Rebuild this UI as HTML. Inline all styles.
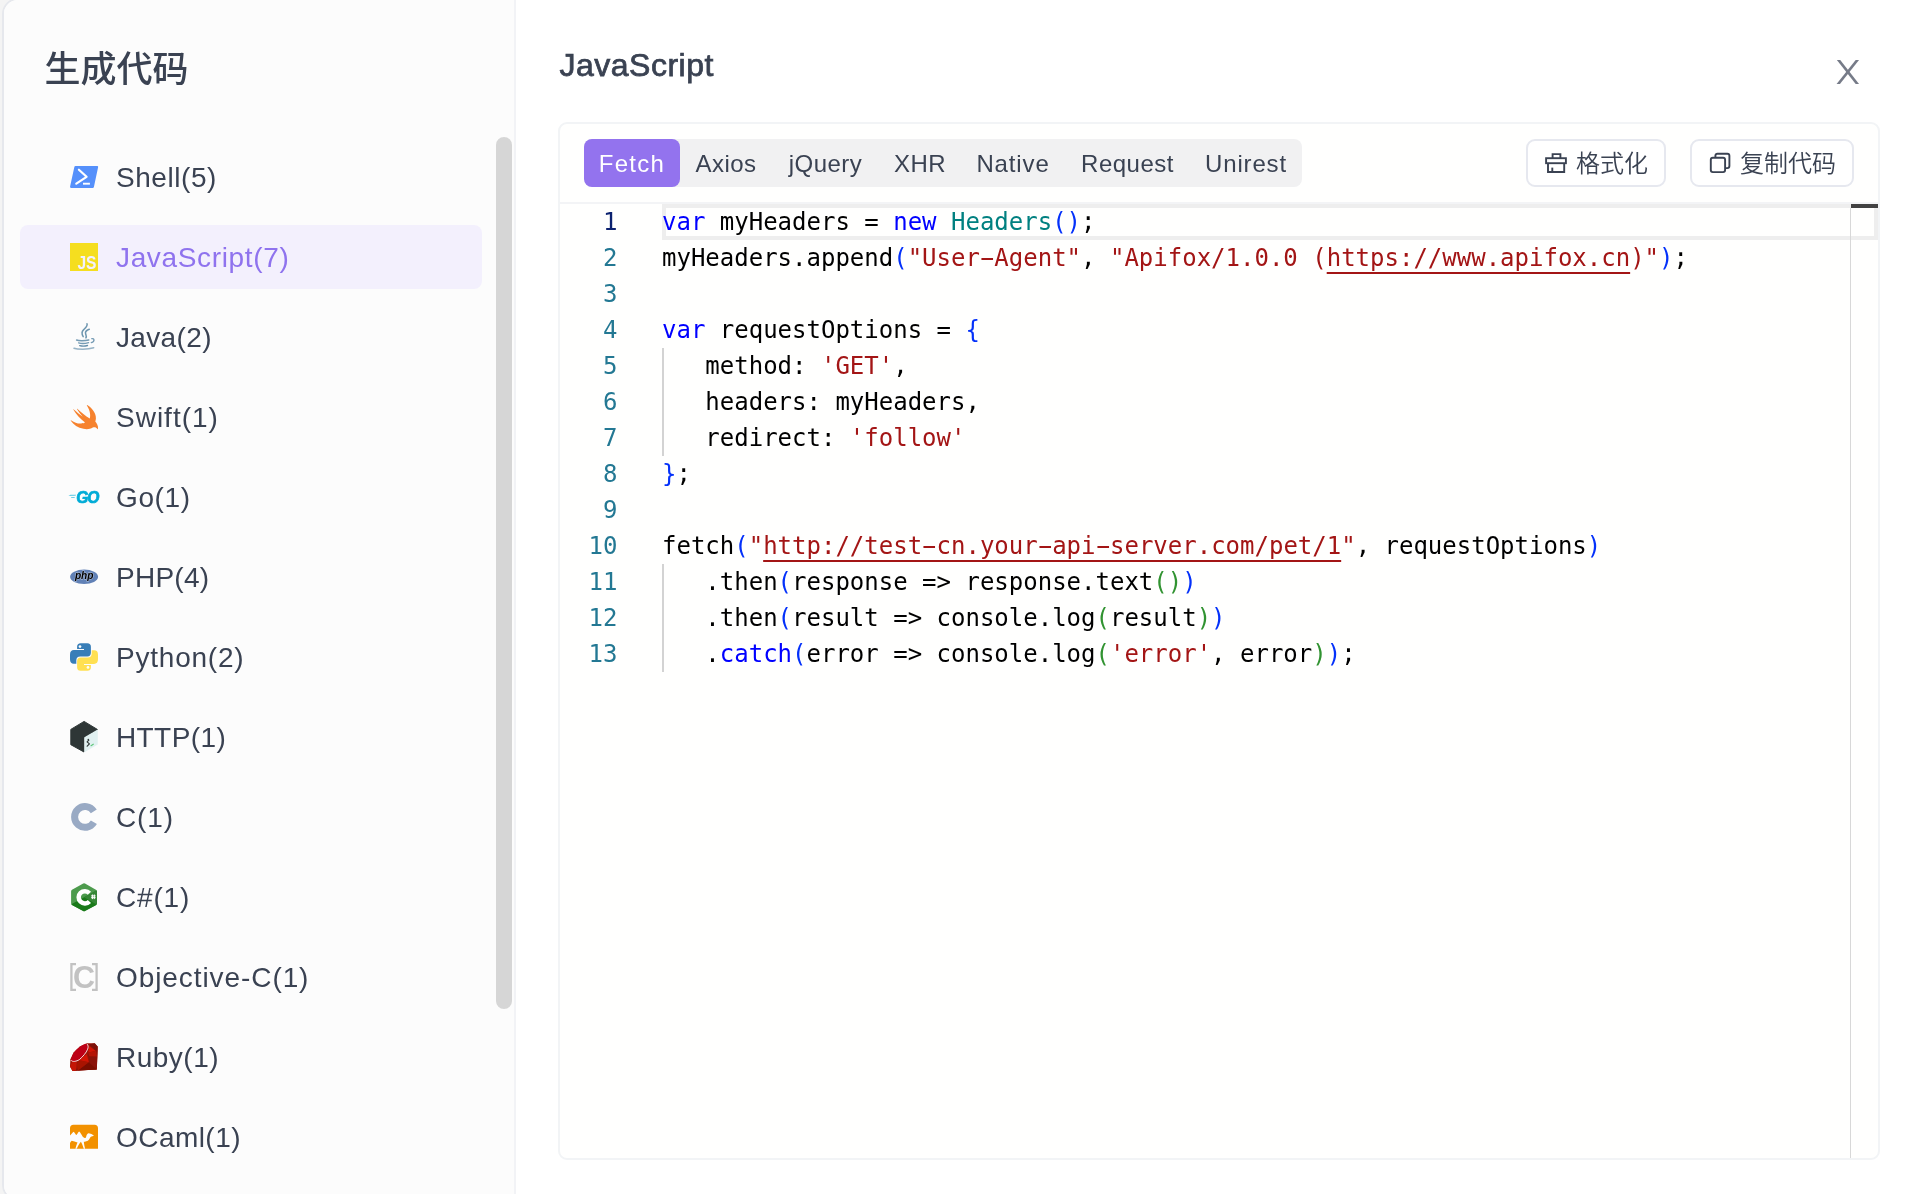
<!DOCTYPE html>
<html lang="zh-CN">
<head>
<meta charset="utf-8">
<title>生成代码</title>
<style>
*{box-sizing:border-box;margin:0;padding:0}
html,body{width:1912px;height:1194px;overflow:hidden;background:#f4f4f4}
body{position:relative;font-family:"Liberation Sans","Noto Sans CJK SC",sans-serif;color:#3a4252}
.modal{position:absolute;left:2px;top:-2px;width:1960px;height:1203px;background:#fff;border:2px solid #e6e8ed;border-radius:16px;overflow:hidden}
.sidebg{position:absolute;left:0;top:0;width:512px;height:1204px;background:#fcfcfc;border-right:2px solid #f2f3f6}
.layer{position:absolute;left:0;top:0;width:1912px;height:1194px;will-change:transform}
.h1{position:absolute;left:44.5px;top:44px;font-size:36px;line-height:52px;font-weight:500;color:#3a4252;white-space:nowrap}
.item{position:absolute;left:20px;width:462px;height:64px;border-radius:8px;font-size:28px;line-height:64px;white-space:nowrap;color:#3a4252}
.item.sel{background:#f3f0fd;color:#8f73ee}
.item svg{position:absolute;left:50px;top:18px;width:28px;height:28px;overflow:visible}
.item span{position:absolute;left:96px;top:1px}
.thumb{position:absolute;left:496px;top:137px;width:16px;height:872px;border-radius:8px;background:#d6d6d6}
.h2{position:absolute;left:559.5px;top:46px;font-size:32px;line-height:38px;color:#3a4252;white-space:nowrap;letter-spacing:.5px;-webkit-text-stroke:.75px #3a4252}
.close{position:absolute;left:1836px;top:60px;width:24px;height:24px;overflow:visible}
.box{position:absolute;left:558px;top:122px;width:1322px;height:1038px;border:2px solid #f2f4f6;border-radius:9px;background:#fffffe}
.tabs{position:absolute;left:584px;top:139px;width:718px;height:48px;border-radius:8px;background:#f1f1f2;font-size:24px;line-height:48px;white-space:nowrap}
.tab{position:absolute;top:0;height:48px;text-align:center;color:#3a4252;letter-spacing:.5px;padding-top:1px}
.tab.on{background:#9373ee;color:#fff;border-radius:8px}
.btn{position:absolute;top:139px;height:48px;border:2px solid #e6e8ef;border-radius:9px;background:#fff;font-size:24px;line-height:44px;color:#3a4252;white-space:nowrap}
.btn svg{position:absolute;left:16px;top:9px;width:24px;height:24px;overflow:visible}
.btn span{position:absolute;left:48px;top:1px;font-weight:350}
.ed{position:absolute;left:560px;top:204px;width:1318px;height:955px;font-family:"DejaVu Sans Mono","Liberation Mono",monospace;font-size:24px;line-height:36px;color:#000}
.topline{position:absolute;left:0;top:-2px;width:1318px;height:2px;background:#f3f4f6}
.cur{position:absolute;left:102px;top:0;width:1216px;height:36px;border:4px solid #eeeeee}
.ln{position:absolute;left:0;width:57.5px;text-align:right;color:#237893;height:36px}
.cl{position:absolute;left:102px;height:36px;white-space:pre}
.k{color:#0000ff}.s{color:#a31515}.t{color:#008080}.b1{color:#0431fa}.b2{color:#319331}
.u{text-decoration:underline;text-decoration-thickness:2px;text-underline-offset:6px;text-decoration-skip-ink:none}
.hy{display:inline-block;transform:scaleX(1.9)}
.guide{position:absolute;left:102px;width:2px;background:#d3d3d3}
.ruler{position:absolute;left:1290px;top:4px;width:1px;height:950px;background:#d8d8d8}
.mark{position:absolute;left:1291px;top:0;width:27px;height:4px;background:#424242}
</style>
</head>
<body>
<div class="modal"><div class="sidebg"></div></div>
<div class="layer">
<div class="h1">生成代码</div>
<div class="item" style="top:145px"><svg viewBox="0 0 28 28"><path d="M5.6 2.9H27a1.1 1.1 0 0 1 1.1 1.4L23.9 24a1.2 1.2 0 0 1-1.2.9H1.2A1.1 1.1 0 0 1 .1 23.5L4.4 3.8A1.2 1.2 0 0 1 5.6 2.9Z" fill="#5590fb"/><path d="M8.9 6.7L16.6 13.8 6.3 20.7" fill="none" stroke="#fff" stroke-width="2.2" stroke-linecap="round" stroke-linejoin="round"/><path d="M13 20.700H19.900" stroke="#fff" stroke-width="1.900"/></svg><span style="letter-spacing:0.55px">Shell(5)</span></div>
<div class="item sel" style="top:225px"><svg viewBox="0 0 28 28"><rect x="0" y="0" width="28" height="28" fill="#f5de1f"/><text transform="translate(7.500 25.700) scale(.85 1)" font-family="Liberation Sans, sans-serif" font-weight="700" font-size="18.300" letter-spacing="-0.300" fill="#f3f0fd">JS</text></svg><span style="letter-spacing:0.65px">JavaScript(7)</span></div>
<div class="item" style="top:305px"><svg viewBox="0 0 28 28"><g fill="none" stroke="#5382a1" stroke-linecap="round"><path d="M17 .8c.9 2.2-1.2 3.9-3.3 5.8-2.2 2-2.5 3.7-.5 7" stroke-width="1.5" opacity=".85"/><path d="M19.3 6.2c-2.7 1-4.3 2.700-3.7 4.600.5 1.600 1.200 2.400.300 4.100" stroke-width="1.5" opacity=".85"/><path d="M6.600 17c1.500.8 8 1 12.200-.1" stroke-width="1.500" opacity=".8"/><path d="M8.600 19.800c2 .7 6.800.7 10-.2" stroke-width="1.300" opacity=".8"/><path d="M9.700 22.600c2 .6 5.300.6 7.800-.1" stroke-width="1.400" opacity=".9"/><path d="M4 25.200c3.500 1.300 13.500 1.500 19.700-.4" stroke-width="1.500" opacity=".6"/><path d="M21.800 15.600c2.600-.5 3.400 2.900-.5 4" stroke-width="1.300" opacity=".8"/></g></svg><span style="letter-spacing:0.35px">Java(2)</span></div>
<div class="item" style="top:385px"><svg viewBox="0 0 28 28"><path d="M17.2 2c5.400 3.300 9 8.600 8.700 13.400-.1 1.400-.4 2.500-.6 3.200 1.600 1.900 3 4.200 2.700 6.900-.1.800-.3 1-.6.500-1.200-2-3.200-2.200-4.600-1.400-2.400 1.400-5.700 2-9.300 1.200C7.900 24.700 3.500 22 .8 17.800c-.3-.5.100-.7.500-.4 3.200 2.200 6.400 3.300 9.600 3.100 2-.1 3.300-.500 4.200-1C10.600 16.300 6.300 11.500 3.400 6.800c-.3-.5 0-.7.400-.4 2.700 2.400 6 5.200 8.900 7.300-1.800-2-4-4.900-5.600-7.500-.3-.5 0-.7.400-.3 3.600 3.300 8 7 12.300 9.600.9-3.200.4-8-2.900-13.100-.2-.4 0-.6.300-.4Z" fill="#f6822e"/></svg><span style="letter-spacing:1.0px">Swift(1)</span></div>
<div class="item" style="top:465px"><svg viewBox="0 0 28 28"><g fill="#00acd7"><path d="M-1.600 12.900L0.400 11.700H6L5.600 12.700Z" opacity=".6"/><rect x="1" y="14" width="3.900" height="1" rx=".4" opacity=".55"/></g><text x="6.300" y="19.500" font-family="Liberation Sans, sans-serif" font-weight="700" font-style="italic" font-size="15.600" letter-spacing="-1.100" fill="#00acd7" stroke="#00acd7" stroke-width=".7">GO</text></svg><span style="letter-spacing:0.6px">Go(1)</span></div>
<div class="item" style="top:545px"><svg viewBox="0 0 28 28"><ellipse cx="14.100" cy="13.800" rx="14" ry="7.200" fill="#6181b6"/><text x="4.900" y="16.300" font-family="Liberation Sans, sans-serif" font-weight="700" font-style="italic" font-size="10.200" fill="#000" stroke="#fff" stroke-opacity=".55" stroke-width=".9" paint-order="stroke">php</text></svg><span style="letter-spacing:0.25px">PHP(4)</span></div>
<div class="item" style="top:625px"><svg viewBox="0 0 28 28"><path d="M7.100 3.800Q7.100.2 10.700.2H17.300Q20.900.2 20.900 3.800V9.800Q20.900 13.400 17.300 13.400H10.300Q6.300 13.400 6.300 17.400V20.700H3.800Q0 20.700 0 16.300V11.700Q0 7.100 4 7.100H14V6.100H7.100Z" fill="#387eb8"/><circle cx="10" cy="3.600" r="1.350" fill="#fcfcfc"/><g transform="rotate(180 14 14)"><path d="M7.100 3.800Q7.100.2 10.700.2H17.300Q20.900.2 20.900 3.800V9.800Q20.900 13.400 17.300 13.400H10.300Q6.300 13.400 6.300 17.400V20.700H3.800Q0 20.700 0 16.300V11.700Q0 7.100 4 7.100H14V6.100H7.100Z" fill="#ffe052"/><circle cx="10" cy="3.600" r="1.350" fill="#fcfcfc"/></g></svg><span style="letter-spacing:0.78px">Python(2)</span></div>
<div class="item" style="top:705px"><svg viewBox="0 0 28 28"><path d="M14.100 -1.600L27.500 6.500 14 14.400V29L.8 21.700V6.400Z" fill="#2e3636" stroke="#2e3636" stroke-width="1" stroke-linejoin="round"/><path d="M27.800 6.600V21.400L14.400 29.200V14.300Z" fill="#e1f1f1"/><path d="M18.800 17.200l-1.700 1.700 2.300 2-2.200 2.300" fill="none" stroke="#2e3636" stroke-width="1.200" stroke-linecap="round" stroke-linejoin="round"/><circle cx="18.300" cy="16.600" r=".8" fill="#2e3636"/><path d="M21 22.700l2.300-1.500" stroke="#5fc77a" stroke-width="1.100" stroke-linecap="round"/></svg><span style="letter-spacing:0.4px">HTTP(1)</span></div>
<div class="item" style="top:785px"><svg viewBox="0 0 28 28"><path d="M23.800 8.400A10.400 10.400 0 1 0 23.900 19.300" fill="none" stroke="#99aac4" stroke-width="7"/></svg><span style="letter-spacing:0.85px">C(1)</span></div>
<div class="item" style="top:865px"><svg viewBox="0 0 28 28"><path d="M13.200.5a1.800 1.800 0 0 1 1.800 0l10.900 6.200a1.800 1.800 0 0 1 .9 1.600v12a1.800 1.800 0 0 1-.9 1.600L15 28.100a1.800 1.800 0 0 1-1.800 0L2 21.900a1.800 1.800 0 0 1-.9-1.600v-12A1.800 1.800 0 0 1 2 6.700Z" fill="#4d9b4d"/><path d="M26.500 7.600c.2.300.3.600.3 1v12a1.800 1.800 0 0 1-.9 1.600L15 28.100a1.800 1.800 0 0 1-1.800 0L2 21.900a1.800 1.800 0 0 1-.6-.6Z" fill="#1a7a1a"/><path d="M26.500 7.600c.2.300.3.600.3 1v12c0 .3-.1.600-.2.800L14.100 14.300Z" fill="#368636"/><path d="M19.400 10.200A6.150 6.150 0 1 0 19.400 18.400" fill="none" stroke="#fff" stroke-width="4.500"/><g stroke="#fff" stroke-width="1" fill="none"><path d="M22.400 11.500v4.600M24.300 11.500v4.600M21.100 12.900h4.500M21.100 14.700h4.500"/></g></svg><span style="letter-spacing:0.8px">C#(1)</span></div>
<div class="item" style="top:945px"><svg viewBox="0 0 28 28"><path d="M6 1.100H1.400V26.900H6M22 1.100H26.600V26.900H22" fill="none" stroke="#c2c2c2" stroke-width="2.300"/><text x="2.900" y="24.900" font-family="Liberation Sans, sans-serif" font-weight="700" font-size="30.500" fill="#c2c2c2">C</text></svg><span style="letter-spacing:0.92px">Objective-C(1)</span></div>
<div class="item" style="top:1025px"><svg viewBox="0 0 28 28"><path d="M16.700.2H24.700L27.800 3.800 26.800 26.400 2.500 28 0 23.500.4 16.300 3.800 9.200 10 3.400Z" fill="#9b1508"/><path d="M18.400 9.600L27.700 5 26.800 26.400 12 27.300 2.500 28 18.800 19.300Z" fill="#8a1209"/><path d="M18.800 19.300L26.800 26.400 8 27.500Z" fill="#7a0d00"/><path d="M18.800 2.900L26 8 18.400 9.600Z" fill="#d21404"/><path d="M18.400 9.600L26 8 27 13.600 19.200 13.200Z" fill="#b41305"/><path d="M18.800 1.500L24.700.2 27.800 3.800 26.200 7.800Z" fill="#7d120a"/><path d="M16.750 10.900L18.800 19.300 9.200 17.200Z" fill="#d21404"/><path d="M9.200 17.200L18.800 19.300 8 27.500 6.800 22Z" fill="#a91401"/><path d="M2.500 18.200L6.800 19 6 27.700 2.500 28 0 23.500Z" fill="#c41606"/><path d="M1 17.200C1.400 13.500 3 10.500 5.600 7.600 8.600 4.300 13 1.300 16.750.8c1.600 1 1.700 3.400.9 5.400-1.300 3.500-4.900 7.600-8.450 10.550C6.500 18.300 2.600 19.400 1 17.200Z" fill="#bd0016"/><path d="M16.750.8c1.600 1 1.700 3.400.9 5.400-1.300 3.500-4.900 7.600-8.450 10.550C6.500 18.300 2.600 19.400 1 17.200" fill="none" stroke="#fdeeee" stroke-width=".9"/></svg><span style="letter-spacing:0.5px">Ruby(1)</span></div>
<div class="item" style="top:1105px"><svg viewBox="0 0 28 28"><path d="M0 5.200a3.500 3.500 0 0 1 3.500-3.500h21a3.500 3.500 0 0 1 3.500 3.500V25.700H0Z" fill="#f29100"/><path d="M0 12.600C1.400 11.400 2.400 9.200 3.600 8.700 4.800 9.400 5.400 11.400 6.500 12.100 7.600 11 8.200 9 9.200 8.600 10.600 9.400 11.400 12 12.600 13.400 13.600 14.400 14.600 15 15.500 14.900 16.300 14.400 16.300 12.200 17.200 11.300 17.700 10.500 18.300 10.200 18.800 10.300 20.400 10.700 22.400 11.400 23.900 12.400 23 13.200 21.700 13.200 20.900 13.800 19.900 14.800 19.400 16.400 18.400 17.200 17.200 18.200 15.200 18.600 13.800 18.800 14 21 14.500 23.500 15.100 25.700H13.800C13 23.500 12 20.600 10.900 18.800 9.300 20.800 7.800 23.400 6.700 25.700H5.400C5.900 23.500 6.700 21.300 7.500 19.500 5.500 19.100 3.400 18.200 1.700 17.800 1 18.400.5 19.300 0 20.100Z" fill="#fcfcfc"/></svg><span style="letter-spacing:0.45px">OCaml(1)</span></div>
<div class="thumb"></div>
<div class="h2">JavaScript</div>
<svg class="close" viewBox="0 0 24 25"><path d="M.4 0H3.900L23.500 25H20Z" fill="#767b88"/><path d="M23.500 0H20L.1 25H3.600Z" fill="#767b88"/></svg>
<div class="box"></div>
<div class="tabs"><div class="tab on" style="left:0px;width:96px;letter-spacing:1.25px">Fetch</div><div class="tab" style="left:96px;width:92px;letter-spacing:0.5px">Axios</div><div class="tab" style="left:188px;width:107px;letter-spacing:0.5px">jQuery</div><div class="tab" style="left:295px;width:82px;letter-spacing:0.5px">XHR</div><div class="tab" style="left:377px;width:104px;letter-spacing:0.87px">Native</div><div class="tab" style="left:481px;width:125px;letter-spacing:0.5px">Request</div><div class="tab" style="left:606px;width:112px;letter-spacing:0.85px">Unirest</div></div>
<div class="btn" style="left:1526px;width:140px"><svg viewBox="0 0 24 24" fill="none" stroke="#3a4252" stroke-width="1.9"><path d="M8.600 8.200V4.100H16.400V8.200"/><rect x="2.100" y="8.200" width="19.800" height="5"/><path d="M4 13.200V22H20.200V13.200"/><path d="M8.300 17.600V22"/></svg><span>格式化</span></div>
<div class="btn" style="left:1690px;width:164px"><svg viewBox="0 0 24 24" fill="none" stroke="#3a4252" stroke-width="1.9"><rect x="2.800" y="7.800" width="14.300" height="14.300" rx="2"/><path d="M7.400 7.800V5.700a2 2 0 0 1 2-2H19.400a2 2 0 0 1 2 2V16.100a2 2 0 0 1-2 2H17.100"/></svg><span>复制代码</span></div>
<div class="ed"><div class="topline"></div><div class="cur"></div><div class="guide" style="top:144px;height:108px"></div><div class="guide" style="top:360px;height:108px"></div><div class="ln" style="top:0px"><span style="color:#0b216f">1</span></div><div class="cl" style="top:0px"><span class="k">var</span> myHeaders = <span class="k">new</span> <span class="t">Headers</span><span class="b1">()</span>;</div><div class="ln" style="top:36px"><span>2</span></div><div class="cl" style="top:36px">myHeaders.append<span class="b1">(</span><span class="s">&quot;User<span class="hy">-</span>Agent&quot;</span>, <span class="s">&quot;Apifox/1.0.0 (<span class="u">https://www.apifox.cn</span>)&quot;</span><span class="b1">)</span>;</div><div class="ln" style="top:72px"><span>3</span></div><div class="cl" style="top:72px"></div><div class="ln" style="top:108px"><span>4</span></div><div class="cl" style="top:108px"><span class="k">var</span> requestOptions = <span class="b1">{</span></div><div class="ln" style="top:144px"><span>5</span></div><div class="cl" style="top:144px">   method: <span class="s">&#39;GET&#39;</span>,</div><div class="ln" style="top:180px"><span>6</span></div><div class="cl" style="top:180px">   headers: myHeaders,</div><div class="ln" style="top:216px"><span>7</span></div><div class="cl" style="top:216px">   redirect: <span class="s">&#39;follow&#39;</span></div><div class="ln" style="top:252px"><span>8</span></div><div class="cl" style="top:252px"><span class="b1">}</span>;</div><div class="ln" style="top:288px"><span>9</span></div><div class="cl" style="top:288px"></div><div class="ln" style="top:324px"><span>10</span></div><div class="cl" style="top:324px">fetch<span class="b1">(</span><span class="s">&quot;<span class="u">http://test<span class="hy u">-</span>cn.your<span class="hy u">-</span>api<span class="hy u">-</span>server.com/pet/1</span>&quot;</span>, requestOptions<span class="b1">)</span></div><div class="ln" style="top:360px"><span>11</span></div><div class="cl" style="top:360px">   .then<span class="b1">(</span>response =&gt; response.text<span class="b2">()</span><span class="b1">)</span></div><div class="ln" style="top:396px"><span>12</span></div><div class="cl" style="top:396px">   .then<span class="b1">(</span>result =&gt; console.log<span class="b2">(</span>result<span class="b2">)</span><span class="b1">)</span></div><div class="ln" style="top:432px"><span>13</span></div><div class="cl" style="top:432px">   .<span class="k">catch</span><span class="b1">(</span>error =&gt; console.log<span class="b2">(</span><span class="s">&#39;error&#39;</span>, error<span class="b2">)</span><span class="b1">)</span>;</div><div class="ruler"></div><div class="mark"></div></div>
</div>
</body>
</html>
